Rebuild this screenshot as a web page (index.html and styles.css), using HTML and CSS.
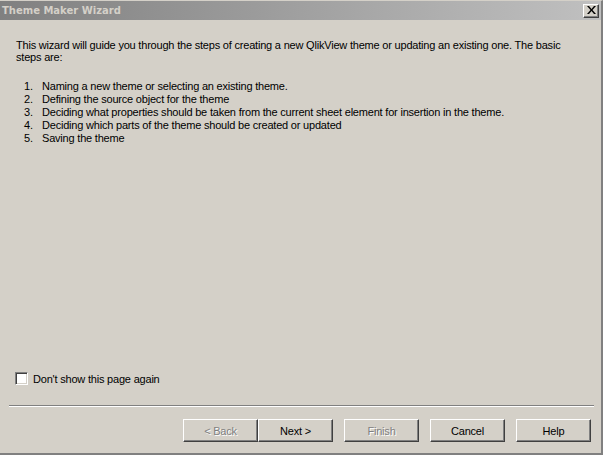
FILE: index.html
```html
<!DOCTYPE html>
<html>
<head>
<meta charset="utf-8">
<link rel="stylesheet" href="styles.css">
</head>
<body>
<div class="window">
  <div class="titlebar">
    <span class="title">Theme Maker Wizard</span>
    <span class="close"><svg width="9" height="8" viewBox="0 0 9 8"><path d="M0 0h2l2.5 3 2.5-3h2L5.5 4 9 8H7L4.5 5 2 8H0l3.5-4z" fill="#000"/></svg></span>
  </div>
  <div class="content">
    <p class="intro">This wizard will guide you through the steps of creating a new QlikView theme or updating an existing one. The basic steps are:</p>
    <ol class="steps">
      <li><span class="num">1.</span>Naming a new theme or selecting an existing theme.</li>
      <li><span class="num">2.</span>Defining the source object for the theme</li>
      <li><span class="num">3.</span>Deciding what properties should be taken from the current sheet element for insertion in the theme.</li>
      <li><span class="num">4.</span>Deciding which parts of the theme should be created or updated</li>
      <li><span class="num">5.</span>Saving the theme</li>
    </ol>
    <div class="spacer"></div>
    <label class="check"><span class="box"></span>Don't show this page again</label>
  </div>
  <div class="separator"></div>
  <div class="buttons">
    <div class="pair">
      <button class="btn disabled">&lt; Back</button>
      <button class="btn">Next &gt;</button>
    </div>
    <button class="btn disabled">Finish</button>
    <button class="btn">Cancel</button>
    <button class="btn">Help</button>
  </div>
</div>
</body>
</html>
```
FILE: styles.css
```css
html, body {
  margin: 0;
  padding: 0;
  width: 603px;
  height: 455px;
  overflow: hidden;
  background: #d4d0c8;
}
.window {
  width: 603px;
  height: 455px;
  box-sizing: border-box;
  background: #d4d0c8;
  border-right: 2px solid #808080;
  border-bottom: 2px solid #808080;
  border-top: 1px solid #d4d0c8;
  display: flex;
  flex-direction: column;
  font-family: "Liberation Sans", Arial, sans-serif;
  font-size: 11px;
  letter-spacing: -0.2px;
  color: #000;
}
.titlebar {
  height: 19px;
  background: linear-gradient(to right, #808080, #c0c0c0);
  display: flex;
  align-items: center;
  justify-content: space-between;
  padding: 0 2px 0 2px;
  flex-shrink: 0;
}
.title {
  font-family: "DejaVu Sans", Verdana, sans-serif;
  font-weight: bold;
  font-size: 10px;
  letter-spacing: 0;
  color: #d4d0c8;
}
.close {
  width: 16px;
  height: 14px;
  box-sizing: border-box;
  background: #d4d0c8;
  border-top: 1px solid #fff;
  border-left: 1px solid #fff;
  border-right: 1px solid #404040;
  border-bottom: 1px solid #404040;
  box-shadow: inset -1px -1px 0 #808080;
  display: flex;
  align-items: center;
  justify-content: center;
}
.close svg { display: block; margin-top: -1px; }
.content {
  flex: 1;
  display: flex;
  flex-direction: column;
  padding: 19px 10px 0 16px;
}
.intro {
  margin: 0;
  line-height: 12px;
  width: 560px;
}
.steps {
  list-style: none;
  margin: 17px 0 0 8px;
  padding: 0;
}
.steps li {
  line-height: 13px;
  display: flex;
}
.num {
  width: 18px;
  flex-shrink: 0;
}
.spacer { flex: 1; }
.check {
  display: flex;
  align-items: center;
  margin: 0 0 20px -1px;
  gap: 5px;
}
.box {
  width: 13px;
  height: 13px;
  box-sizing: border-box;
  background: #fff;
  border-top: 1px solid #808080;
  border-left: 1px solid #808080;
  border-right: 1px solid #fff;
  border-bottom: 1px solid #fff;
  box-shadow: inset 1px 1px 0 #404040, inset -1px -1px 0 #d4d0c8;
}
.separator {
  height: 0;
  margin: 0 7px 0 9px;
  border-top: 1px solid #808080;
  border-bottom: 1px solid #fff;
}
.buttons {
  display: flex;
  justify-content: flex-end;
  padding: 12px 10px 11px 0;
}
.pair { display: flex; margin-right: 11px; }
.btn {
  width: 75px;
  height: 23px;
  box-sizing: border-box;
  background: #d4d0c8;
  border-top: 1px solid #fff;
  border-left: 1px solid #fff;
  border-right: 1px solid #404040;
  border-bottom: 1px solid #404040;
  box-shadow: inset -1px -1px 0 #808080;
  font-family: "Liberation Sans", Arial, sans-serif;
  font-size: 11px;
  letter-spacing: -0.2px;
  color: #000;
  padding: 0;
}
.buttons > .btn { margin-right: 11px; }
.buttons > .btn:last-child { margin-right: 0; }
.btn.disabled {
  color: #808080;
  text-shadow: 1px 1px 0 #fff;
}
```
